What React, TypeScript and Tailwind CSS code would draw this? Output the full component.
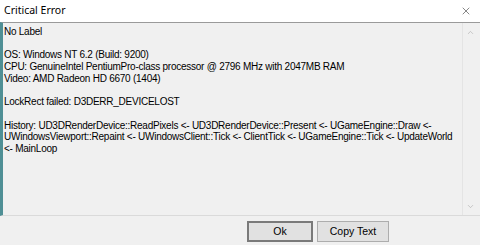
import { X, ChevronUp, ChevronDown } from 'lucide-react';

const lines = [
  'No Label',
  '',
  'OS: Windows NT 6.2 (Build: 9200)',
  'CPU: GenuineIntel PentiumPro-class processor @ 2796 MHz with 2047MB RAM',
  'Video: AMD Radeon HD 6670 (1404)',
  '',
  'LockRect failed: D3DERR_DEVICELOST',
  '',
  'History: UD3DRenderDevice::ReadPixels <- UD3DRenderDevice::Present <- UGameEngine::Draw <-',
  'UWindowsViewport::Repaint <- UWindowsClient::Tick <- ClientTick <- UGameEngine::Tick <- UpdateWorld',
  '<- MainLoop',
];

export default function App() {
  return (
    <div className="w-[480px] h-[245px] bg-[#f0f0f0] flex flex-col overflow-hidden">
      {/* title bar */}
      <div className="h-[22px] bg-white flex items-center justify-between pl-[4px] pr-[8px] shrink-0">
        <span className="text-[10.5px] text-black" style={{ fontFamily: '"Noto Sans", "Open Sans", sans-serif' }}>
          Critical Error
        </span>
        <X size={12} strokeWidth={1.1} className="text-[#222]" />
      </div>

      {/* text box */}
      <div className="h-[194px] shrink-0 flex border-t border-t-[#9a9a9a] border-l-[3px] border-l-[#4f8f95] border-b border-b-[#dadada] pr-[2px]">
        <div
          className="flex-1 pl-[1px] pt-[3px] text-[10px] tracking-[-0.25px] text-black whitespace-pre"
          style={{ fontFamily: '"Liberation Sans", Arial, sans-serif' }}
        >
          {lines.map((l, i) => (
            <div key={i} className="h-[11.7px] leading-[11.7px]">{l}</div>
          ))}
        </div>
        <div className="w-[16px] flex flex-col items-center justify-between pt-[5px] pb-[4px] border-l border-l-[#e4e4e4] bg-[#f0f0f0]">
          <ChevronUp size={9} strokeWidth={1.5} className="text-[#a6a6a6]" />
          <ChevronDown size={9} strokeWidth={1.5} className="text-[#a6a6a6]" />
        </div>
      </div>

      {/* buttons */}
      <div className="flex gap-[4px] pl-[247px] pt-[5px]" style={{ fontFamily: '"Liberation Sans", Arial, sans-serif' }}>
        <button className="w-[66px] h-[21px] bg-[#e1e1e1] border-2 border-[#7a7a7a] text-[10.5px] text-black flex items-center justify-center">
          Ok
        </button>
        <button className="w-[72px] h-[21px] bg-[#e1e1e1] border border-[#adadad] text-[10.5px] text-black flex items-center justify-center">
          Copy Text
        </button>
      </div>
    </div>
  );
}
